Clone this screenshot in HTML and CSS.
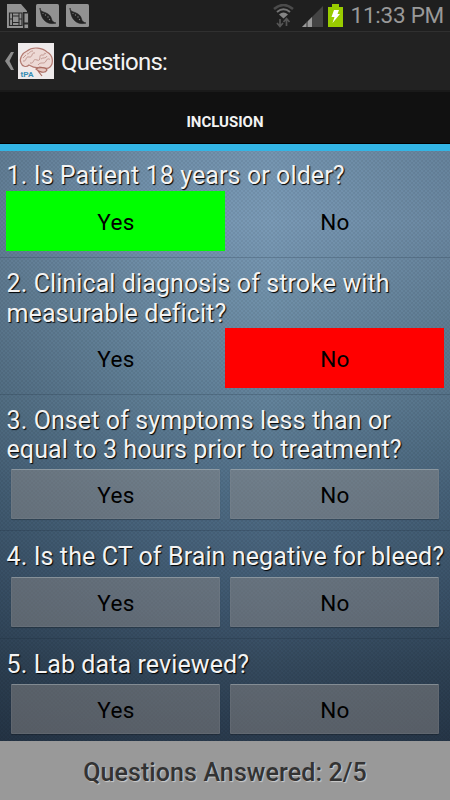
FILE: index.html
```html
<!DOCTYPE html>
<html lang="en">
<head>
  <meta charset="UTF-8">
  <title>Questions</title>
  <link rel="stylesheet" href="styles.css">
</head>
<body>
  <div class="status-bar">
    <div class="notifications">
      <svg width="22" height="25" viewBox="0 0 22 25">
        <path d="M0 0H14L20 7V24H0Z" fill="#929292"/>
        <path d="M2.5 9H15V21.500H2.500Z" fill="none" stroke="#292929" stroke-width="1.200"/>
        <path d="M5.500 12H12V18.500H5.500ZM5.500 9V12M12 9V12M5.500 18V21.500M12 18V21.500M2.500 15H5.500M12 15H15" fill="none" stroke="#292929"/>
        <path d="M16 8H22V25H16Z" fill="#292929"/>
        <path d="M17.500 9.500H21V18.500H17.500ZM17.500 20.500H21V24H17.500Z" fill="#929292"/>
      </svg>
      <svg width="23" height="23" viewBox="0 0 23 23">
        <rect width="23" height="23" rx="1.500" fill="#929292"/>
        <path d="M4 4C4 7 6 7.500 9 8.500C13 10 15 12 15.500 15C16 17.500 18 18.500 20 19C17 20 12 20 8.500 16.500C5 13 4.500 8 4 4Z" fill="#222" stroke="#222" stroke-width=".6"/>
        <g fill="#858585">
          <circle cx="7" cy="9.500" r=".6"/>
          <circle cx="9.500" cy="11" r=".7"/>
          <circle cx="12" cy="13" r=".7"/>
          <circle cx="13.500" cy="15.500" r=".7"/>
        </g>
      </svg>
      <svg width="23" height="23" viewBox="0 0 23 23">
        <rect width="23" height="23" rx="1.500" fill="#929292"/>
        <path d="M4 4C4 7 6 7.500 9 8.500C13 10 15 12 15.500 15C16 17.500 18 18.500 20 19C17 20 12 20 8.500 16.500C5 13 4.500 8 4 4Z" fill="#222" stroke="#222" stroke-width=".6"/>
        <g fill="#858585">
          <circle cx="7" cy="9.500" r=".6"/>
          <circle cx="9.500" cy="11" r=".7"/>
          <circle cx="12" cy="13" r=".7"/>
          <circle cx="13.500" cy="15.500" r=".7"/>
        </g>
      </svg>
    </div>
    <div class="system">
      <svg width="21" height="24" viewBox="0 0 21 24">
        <path d="M1 5Q10.500-3 20 5" fill="none" stroke="#4b4b4b" stroke-width="2.500"/>
        <path d="M4 8Q10.500 2.500 17 8" fill="none" stroke="#757575" stroke-width="2"/>
        <path d="M6 10.500Q10.500 6.500 15 10.500L10.500 14.500Z" fill="#858585"/>
        <path d="M7 15V22M4 19L7 22.500L10 19M13.500 22V15M10.500 18L13.500 14.500L16.500 18" fill="none" stroke="#555" stroke-width="1.700"/>
      </svg>
      <svg class="signal" width="21" height="21" viewBox="0 0 21 21">
        <path d="M0 21L21 0V21Z" fill="#444"/>
        <path d="M0 21L10 11V21Z" fill="#999"/>
        <path d="M5 15V21" stroke="#333"/>
      </svg>
      <svg width="15" height="23" viewBox="0 0 15 23">
        <path d="M4 0H11V3H15V23H0V3H4Z" fill="#99cc00"/>
        <path d="M6 6H11L9.500 10H12L4.500 19L6.500 13H3.500Z" fill="#fff"/>
      </svg>
      <span class="clock">11:33 PM</span>
    </div>
  </div>

  <div class="action-bar">
    <svg width="9" height="18" viewBox="0 0 9 18">
      <path d="M6 0H9L4.500 9L9 18H6L0 9Z" fill="#8c8c8c"/>
    </svg>
    <svg class="logo" width="36" height="36" viewBox="0 0 36 36">
      <defs>
        <radialGradient id="glow">
          <stop offset="0.400" stop-color="#f4e8e6"/>
          <stop offset="1" stop-color="#eeeaeb"/>
        </radialGradient>
      </defs>
      <rect width="36" height="36" fill="url(#glow)"/>
      <path d="M3 20C1 16 4 10 9 8C15 3 25 5 29 9C35 12 36 20 32 24C29 27 25 25 22 24C17 26 13 23 11 22C8 25 4 23 3 20Z" fill="#edd9d5" stroke="#b37b72" stroke-width="1.200"/>
      <path d="M5 18C9 19 7 13 11 14S13 9 17 10M12 20C17 21 14 15 19 17S20 11 24 12S25 8 28 11M20 22C23 18 26 22 28 18S31 17 32 16M9 11C12 11 11 8 15 8M23 16C25 14 28 16 29 13M5 15L8 12" fill="none" stroke="#c39a93"/>
      <path d="M18 26C20 24 28 24 29 27C27 31 21 29 18 26ZM20 28L24 33" fill="#e6c8c2" stroke="#a96b61" stroke-width="1.200"/>
      <text class="logo-text" x="2.500" y="33.500" textLength="13" lengthAdjust="spacingAndGlyphs">tPA</text>
    </svg>
    <h1>Questions:</h1>
  </div>

  <div class="tab">INCLUSION</div>

  <div class="questions">
    <div class="question">
      <p>1. Is Patient 18 years or older?</p>
      <div class="answers">
        <button class="yes">Yes</button>
        <button class="plain">No</button>
      </div>
    </div>
    <div class="question">
      <p>2. Clinical diagnosis of stroke with<br>measurable deficit?</p>
      <div class="answers">
        <button class="plain">Yes</button>
        <button class="no">No</button>
      </div>
    </div>
    <div class="question">
      <p>3. Onset of symptoms less than or<br>equal to 3 hours prior to treatment?</p>
      <div class="answers">
        <button>Yes</button>
        <button>No</button>
      </div>
    </div>
    <div class="question">
      <p>4. Is the CT of Brain negative for bleed?</p>
      <div class="answers">
        <button>Yes</button>
        <button>No</button>
      </div>
    </div>
    <div class="question">
      <p>5. Lab data reviewed?</p>
      <div class="answers">
        <button>Yes</button>
        <button>No</button>
      </div>
    </div>
  </div>

  <div class="footer">Questions Answered: 2/5</div>
</body>
</html>
```
FILE: styles.css
```css
* {
  box-sizing: border-box;
}

body {
  margin: 0;
  width: 450px;
  height: 800px;
  display: flex;
  flex-direction: column;
  overflow: hidden;
  background: #111;
  color: #f3f3f3;
  font-family: Roboto, sans-serif;
}

.status-bar {
  height: 32px;
  flex: none;
  display: flex;
  justify-content: space-between;
  padding: 4px 6px 0 7px;
  background: #1f1f1f;
  border-bottom: 1px solid #303030;
}

.notifications {
  display: flex;
  gap: 7px;
}

.system {
  display: flex;
  align-items: flex-start;
}

.signal {
  margin: 2px 5px 0 8px;
}

.clock {
  margin-left: 8px;
  font-size: 22.5px;
  line-height: 23px;
  letter-spacing: -0.25px;
  color: #999;
  white-space: nowrap;
}

.action-bar {
  height: 60px;
  flex: none;
  display: flex;
  align-items: center;
  padding-left: 5px;
  background: #222;
  border-bottom: 2px solid #1a1a1a;
}

.logo {
  margin: 0 7px 0 4px;
}

.logo-text {
  font-size: 7px;
  font-weight: bold;
  fill: #3b8fb5;
}

h1 {
  margin: 2px 0 0;
  font-size: 24px;
  font-weight: normal;
  letter-spacing: -0.75px;
}

.tab {
  height: 59px;
  flex: none;
  padding-top: 1px;
  border-bottom: 7px solid #33b5e5;
  box-shadow: inset 0 -1px #000;
  text-align: center;
  font-size: 15px;
  line-height: 58px;
  font-weight: bold;
}

.questions {
  height: 590px;
  flex: none;
  overflow: hidden;
  background:
    radial-gradient(circle, rgba(0, 0, 0, 0.06) 0.7px, transparent 1px) 0 0 / 4px 4px,
    radial-gradient(circle, rgba(0, 0, 0, 0.06) 0.7px, transparent 1px) 2px 2px / 4px 4px,
    linear-gradient(90deg, rgba(10, 20, 30, 0.2), rgba(10, 20, 30, 0.05) 35%, transparent 60%, rgba(10, 20, 30, 0.14)),
    linear-gradient(#7595b0, #7a9ab6 12%, #7090a9 25%, #62829a 43%, #506e87 58%, #3f5870 77%, #354a5e 87%, #2a3b4e);
}

.question {
  padding: 11px 6px 6px;
  border-bottom: 1px solid rgba(20, 35, 50, 0.2);
}

.question p {
  margin: 0 0 0 0.5px;
  font-size: 25px;
  line-height: 29.3px;
  letter-spacing: 0.1px;
  white-space: nowrap;
  text-shadow: 1px 1px 1px #000;
}

.question:first-child p {
  margin-top: -1px;
  margin-bottom: 1px;
}

.answers {
  height: 60px;
  display: flex;
  width: 438px;
}

button {
  flex: 1;
  margin: 5px;
  padding: 2px 0 0 1px;
  border: 1px solid rgba(160, 170, 180, 0.12);
  border-top-color: rgba(190, 200, 205, 0.4);
  border-radius: 1px;
  background: rgba(145, 142, 140, 0.46);
  box-shadow: 0 1px 1px rgba(0, 0, 0, 0.25);
  color: #000;
  font-family: inherit;
  font-size: 22.5px;
  letter-spacing: 0.4px;
}

button.yes,
button.no,
button.plain {
  margin: 0;
  border: none;
  border-radius: 0;
  background: none;
  box-shadow: none;
}

button.yes {
  background: #00ff00;
}

button.no {
  background: #ff0000;
}

.footer {
  height: 59px;
  flex: none;
  background: #999;
  color: #333;
  text-align: center;
  font-size: 25px;
  line-height: 63px;
  font-weight: 500;
  letter-spacing: 0.1px;
  text-shadow: 1px 1px 1px #ccc;
}
```
